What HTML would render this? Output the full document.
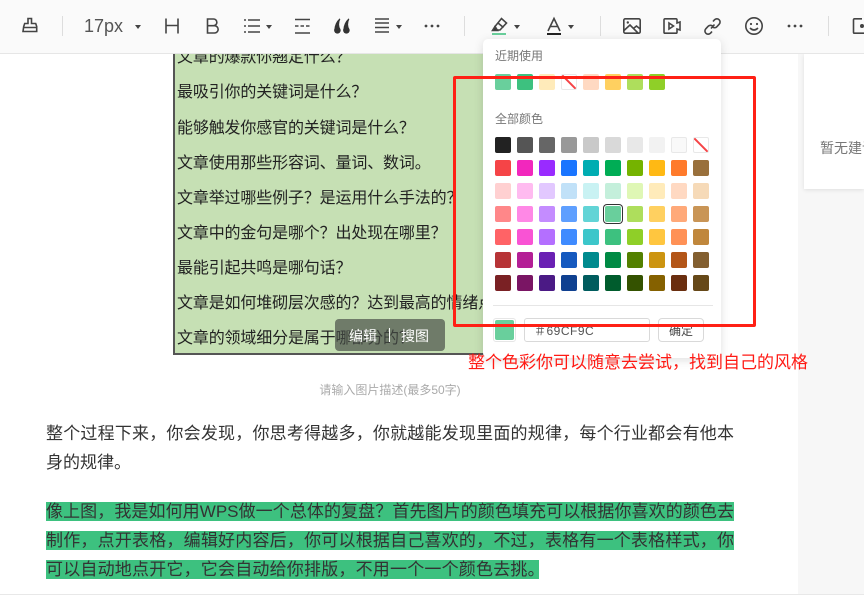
<!DOCTYPE html>
<html lang="zh"><head><meta charset="utf-8"><title>编辑器</title>
<style>
html,body{margin:0;padding:0;background:#fff}
body{width:864px;height:595px;overflow:hidden;position:relative;font-family:"Liberation Sans","WenQuanYi Zen Hei","Noto Sans CJK SC",sans-serif;color:#333}
.a{position:absolute}
#tb{left:0;top:0;width:864px;height:53px;background:#fafafa;border-bottom:1px solid #e6e6e6;z-index:3}
.sep{position:absolute;top:16px;width:1px;height:20px;background:#ddd}
.car{position:absolute;top:25px;width:0;height:0;border-left:3.5px solid transparent;border-right:3.5px solid transparent;border-top:4px solid #444}
svg{position:absolute;overflow:visible;fill:none;stroke:#444;stroke-width:1.6}
#img{left:173px;top:40px;width:450px;height:315px;background:#c6e0b4;border-left:2px solid #555;border-bottom:2px solid #555;box-sizing:border-box;overflow:hidden;filter:blur(.25px)}
#img div{position:absolute;left:2px;white-space:nowrap;font-size:16px;line-height:20px;height:20px;color:#222;letter-spacing:-.15px}
#img i{font-style:normal;font-family:"Noto Sans CJK TC",sans-serif;line-height:0}
.p{position:absolute;left:46px;width:688px;height:19px;line-height:20px;font-size:17px;white-space:nowrap;color:#333}
.j{text-align:justify;text-align-last:justify;white-space:normal}
.hl{background:#3dc17f}
#pop{left:483px;top:39px;width:238px;height:319px;background:#fff;border-radius:5px;box-shadow:0 2px 10px rgba(0,0,0,.13);z-index:4}
.lab{position:absolute;font-size:12px;line-height:14px;color:#777;left:495px}
.g{position:absolute;left:495px;display:grid;grid-template-columns:repeat(10,16px);column-gap:6px;row-gap:7px;z-index:5}
.g div{width:16px;height:16px;border-radius:2px;box-sizing:border-box;position:relative}
.no{background:#fff;border:1px solid #e8e8e8;overflow:hidden}
.no:after{content:"";position:absolute;left:-3px;top:6px;width:20px;height:1.5px;background:#f54447;transform:rotate(45deg)}
.box{position:absolute;box-sizing:border-box;border:1px solid #d9d9d9;border-radius:3px;background:#fff;z-index:5}
#red{left:453px;top:76px;width:303px;height:251px;box-sizing:border-box;border:3px solid #ff2015;border-radius:2px;z-index:6}
</style></head><body>

<div class="a" style="left:798px;top:54px;width:66px;height:541px;background:#f7f7f7"></div>
<div class="a" style="left:804px;top:54px;width:60px;height:135px;background:#fff;box-shadow:0 1px 4px rgba(0,0,0,.1);overflow:hidden">
<div class="a" style="left:16px;top:85px;font-size:14px;line-height:18px;color:#777;white-space:nowrap">暂无建议</div></div>
<div class="a" style="left:0;top:594px;width:864px;height:1px;background:#e8e8e8"></div>

<div id="img" class="a">
<div style="top:8px">文章的爆款你翘定什么<i>？</i></div>
<div style="top:43px">最吸引你的关键词是什么<i>？</i></div>
<div style="top:79px">能够触发你感官的关键词是什么<i>？</i></div>
<div style="top:114px">文章使用那些形容词、量词、数词。</div>
<div style="top:149px">文章举过哪些例子<i>？</i>是运用什么手法的<i>？</i></div>
<div style="top:184px">文章中的金句是哪个<i>？</i>出处现在哪里<i>？</i></div>
<div style="top:219px">最能引起共鸣是哪句话<i>？</i></div>
<div style="top:254px">文章是如何堆砌层次感的<i>？</i>达到最高的情绪点在哪里<i>？</i></div>
<div style="top:289px">文章的领域细分是属于哪部分的<i>？</i></div>
</div>
<div class="a" style="left:335px;top:319px;width:110px;height:32px;border-radius:4px;background:rgba(70,75,70,.68)"></div>
<div class="a" style="left:349px;top:327px;font-size:14px;line-height:18px;color:#fff">编辑</div>
<div class="a" style="left:389px;top:328px;width:1px;height:14px;background:#fff"></div>
<div class="a" style="left:401px;top:327px;font-size:14px;line-height:18px;color:#fff">搜图</div>

<div class="a" style="left:250px;width:280px;top:383px;text-align:center;font-size:12px;line-height:15px;color:#aaa">请输入图片描述(最多50字)</div>

<div class="p j" style="top:424px">整个过程下来，你会发现，你思考得越多，你就越能发现里面的规律，每个行业都会有他本</div>
<div class="p" style="top:453px">身的规律。</div>
<div class="p j hl" style="top:502px">像上图，我是如何用WPS做一个总体的复盘？首先图片的颜色填充可以根据你喜欢的颜色去</div>
<div class="p j hl" style="top:531px">制作，点开表格，编辑好内容后，你可以根据自己喜欢的，不过，表格有一个表格样式，你</div>
<div class="p hl" style="top:560px;width:493px;letter-spacing:.2px">可以自动地点开它，它会自动给你排版，不用一个一个颜色去挑。</div>

<div id="tb" class="a">
<svg style="left:22px;top:17px" width="16" height="16" viewBox="0 0 16 16"><path d="M6 1.500h3.500v5h4.200l1 3v5H1l.7-5 1-3H6zM1.600 10.500h13"/></svg>
<div class="sep" style="left:62px"></div>
<div class="a" style="left:84px;top:16px;font-size:18px;line-height:21px;color:#555">17px</div>
<div class="car" style="left:135px"></div>
<svg style="left:165px;top:18px" width="14" height="16" viewBox="0 0 14 16"><path d="M1 .5v15M13 .5v15M1 7.500h12"/></svg>
<svg style="left:206px;top:18px" width="13" height="16" viewBox="0 0 13 16"><path d="M1.500 1h6a3.300 3.300 0 0 1 0 6.700h-6zM1.500 7.700h7a3.600 3.600 0 0 1 0 7.300h-7z"/></svg>
<svg style="left:244px;top:18px" width="16" height="16" viewBox="0 0 16 16"><path d="M4 2h12M4 8h12M4 14h12M0 2h2M0 8h2M0 14h2"/></svg>
<div class="car" style="left:266px"></div>
<svg style="left:295px;top:18px" width="15" height="16" viewBox="0 0 15 16"><path d="M0 1.500h15M0 15h15"/><path d="M0 8h15" stroke-dasharray="3.500 2"/></svg>
<svg style="left:334px;top:18px" width="16" height="16" viewBox="0 0 16 16"><g fill="#333" stroke="none"><circle cx="3.400" cy="12.300" r="3.300"/><circle cx="12.400" cy="12.300" r="3.300"/><path d="M.3 12Q.6 5 5.600.4L6.300 1.200Q3.800 6 6.500 12zM9.300 12q.3-7 5.300-11.600l.7.8q-2.500 4.800.2 10.800z"/></g></svg>
<svg style="left:375px;top:18px" width="14" height="15" viewBox="0 0 14 15"><path d="M0 1h14M0 5h14M0 9.500h14M0 14h14"/></svg>
<div class="car" style="left:396px"></div>
<svg style="left:424px;top:24px" width="16" height="4" viewBox="0 0 16 4"><g fill="#444" stroke="none"><circle cx="2" cy="2" r="1.400"/><circle cx="8" cy="2" r="1.400"/><circle cx="14" cy="2" r="1.400"/></g></svg>
<div class="sep" style="left:464px"></div>
<svg style="left:492px;top:17px" width="15" height="15" viewBox="0 0 15 15"><path d="M3 9.500L9.500 1.500l5 4.500-6.500 7H5z"/><path d="M6 6l5.500 4.500"/><path d="M3 9.500l2.500 4H.5z" fill="#333"/></svg>
<div class="a" style="left:492px;top:33px;width:14px;height:2px;background:#69cf9c"></div>
<div class="car" style="left:514px"></div>
<svg style="left:547px;top:18px" width="14" height="13" viewBox="0 0 14 13"><path d="M1 13L7 .5 13 13M3 8.500h8"/></svg>
<div class="a" style="left:547px;top:33px;width:14px;height:2px;background:#222"></div>
<div class="car" style="left:568px"></div>
<div class="sep" style="left:600px"></div>
<svg style="left:623px;top:18px" width="18" height="16" viewBox="0 0 18 16"><rect x=".8" y=".8" width="16.400" height="14.400" rx="1.500"/><path d="M1 12.500L7 7l8 8M11 10l2.500-2 3.700 3"/><circle cx="4.800" cy="4.500" r="1.200" fill="#444" stroke="none"/></svg>
<svg style="left:663px;top:18px" width="18" height="16" viewBox="0 0 18 16"><path d="M2 .8h11a1 1 0 0 1 1 1V5l3-1v8l-3-1v3.200a1 1 0 0 1-1 1H2a1 1 0 0 1-1-1V1.800a1 1 0 0 1 1-1z"/><path d="M6 5l4.500 3L6 11z"/></svg>
<svg style="left:704px;top:18px" width="17" height="17" viewBox="0 0 17 17"><path d="M7 10.500L10.500 6.500M9 3.500l1.500-1.700a3.200 3.200 0 0 1 4.700 4.400l-2.300 2.500a3.200 3.200 0 0 1-4.600.1M8 13.500l-1.500 1.700a3.200 3.200 0 0 1-4.700-4.400l2.300-2.500a3.200 3.200 0 0 1 4.600-.1"/></svg>
<svg style="left:745px;top:17px" width="18" height="18" viewBox="0 0 18 18"><circle cx="9" cy="9" r="8.200"/><path d="M5 11q4 4 8 0"/><circle cx="6" cy="7" r="1.100" fill="#444" stroke="none"/><circle cx="12" cy="7" r="1.100" fill="#444" stroke="none"/></svg>
<svg style="left:787px;top:24px" width="16" height="4" viewBox="0 0 16 4"><g fill="#444" stroke="none"><circle cx="2" cy="2" r="1.400"/><circle cx="8" cy="2" r="1.400"/><circle cx="14" cy="2" r="1.400"/></g></svg>
<div class="sep" style="left:828px"></div>
<svg style="left:853px;top:18px" width="18" height="16" viewBox="0 0 18 16"><path d="M9 .8H1.500a1 1 0 0 0-1 1v12.400a1 1 0 0 0 1 1H17"/><circle cx="9" cy="8" r="2" fill="#444" stroke="none"/></svg>
</div>

<div id="pop" class="a"></div>
<div class="lab" style="top:49px;z-index:5">近期使用</div>
<div class="g" style="top:74px">
<div style="background:#69cf9c"></div><div style="background:#3dc17f"></div><div style="background:#ffebba"></div><div class="no"></div><div style="background:#ffd9c2"></div><div style="background:#ffd060"></div><div style="background:#aede5c"></div><div style="background:#8fcf28"></div>
</div>
<div class="lab" style="top:112px;z-index:5">全部颜色</div>
<div class="g" style="top:137px">
<div style="background:#222"></div><div style="background:#555"></div><div style="background:#666"></div><div style="background:#999"></div><div style="background:#c9c9c9"></div><div style="background:#d9d9d9"></div><div style="background:#e8e8e8"></div><div style="background:#f2f2f2"></div><div style="background:#f9f9f9;border:1px solid #e8e8e8"></div><div class="no"></div>
<div style="background:#f54447"></div><div style="background:#f227bd"></div><div style="background:#992bff"></div><div style="background:#1a75ff"></div><div style="background:#00adb2"></div><div style="background:#00ad55"></div><div style="background:#75b300"></div><div style="background:#ffb914"></div><div style="background:#ff7a2b"></div><div style="background:#99703c"></div>
<div style="background:#ffd0d1"></div><div style="background:#ffbbf0"></div><div style="background:#e2c8ff"></div><div style="background:#c1e1f8"></div><div style="background:#c9f2f3"></div><div style="background:#c4efdb"></div><div style="background:#dff7b5"></div><div style="background:#ffebba"></div><div style="background:#ffd9c2"></div><div style="background:#f6dab8"></div>
<div style="background:#ff8789"></div><div style="background:#ff88e6"></div><div style="background:#c48cff"></div><div style="background:#5e9fff"></div><div style="background:#62d4d6"></div><div style="background:#69cf9c;box-shadow:0 0 0 1px #fff,0 0 0 2px #333"></div><div style="background:#aede5c"></div><div style="background:#ffd060"></div><div style="background:#ffa979"></div><div style="background:#c99556"></div>
<div style="background:#ff6366"></div><div style="background:#f953d4"></div><div style="background:#b46fff"></div><div style="background:#3f8bff"></div><div style="background:#3cc6ca"></div><div style="background:#3dc17f"></div><div style="background:#8fcf28"></div><div style="background:#ffc63f"></div><div style="background:#ff9156"></div><div style="background:#c0873c"></div>
<div style="background:#b73437"></div><div style="background:#b41f96"></div><div style="background:#6a20b3"></div><div style="background:#1559bf"></div><div style="background:#008a8e"></div><div style="background:#008a44"></div><div style="background:#538000"></div><div style="background:#cc9410"></div><div style="background:#b35517"></div><div style="background:#835f30"></div>
<div style="background:#7a2124"></div><div style="background:#7a1564"></div><div style="background:#4b1a85"></div><div style="background:#0f4090"></div><div style="background:#005c5e"></div><div style="background:#005c2d"></div><div style="background:#345200"></div><div style="background:#856100"></div><div style="background:#6a2e0f"></div><div style="background:#664818"></div>
</div>
<div class="a" style="left:493px;top:305px;width:220px;height:1px;background:#e6e6e6;z-index:5"></div>
<div class="box" style="left:493px;top:318px;width:23px;height:24px;border-color:#e6e6e6"><div class="a" style="left:1px;top:1px;width:19px;height:20px;border-radius:2px;background:#69cf9c"></div></div>
<div class="box" style="left:524px;top:318px;width:126px;height:24px;padding-left:9px;font-size:12px;line-height:24px;color:#555;letter-spacing:.5px">＃69CF9C</div>
<div class="box" style="left:658px;top:318px;width:46px;height:24px;text-align:center;font-size:12px;line-height:25px;color:#444;border-radius:4px">确定</div>

<div id="red" class="a"></div>
<div class="a" style="left:468px;top:353px;font-size:17px;line-height:20px;color:#ff1a14;white-space:nowrap;z-index:7">整个色彩你可以随意去尝试，找到自己的风格</div>
</body></html>
